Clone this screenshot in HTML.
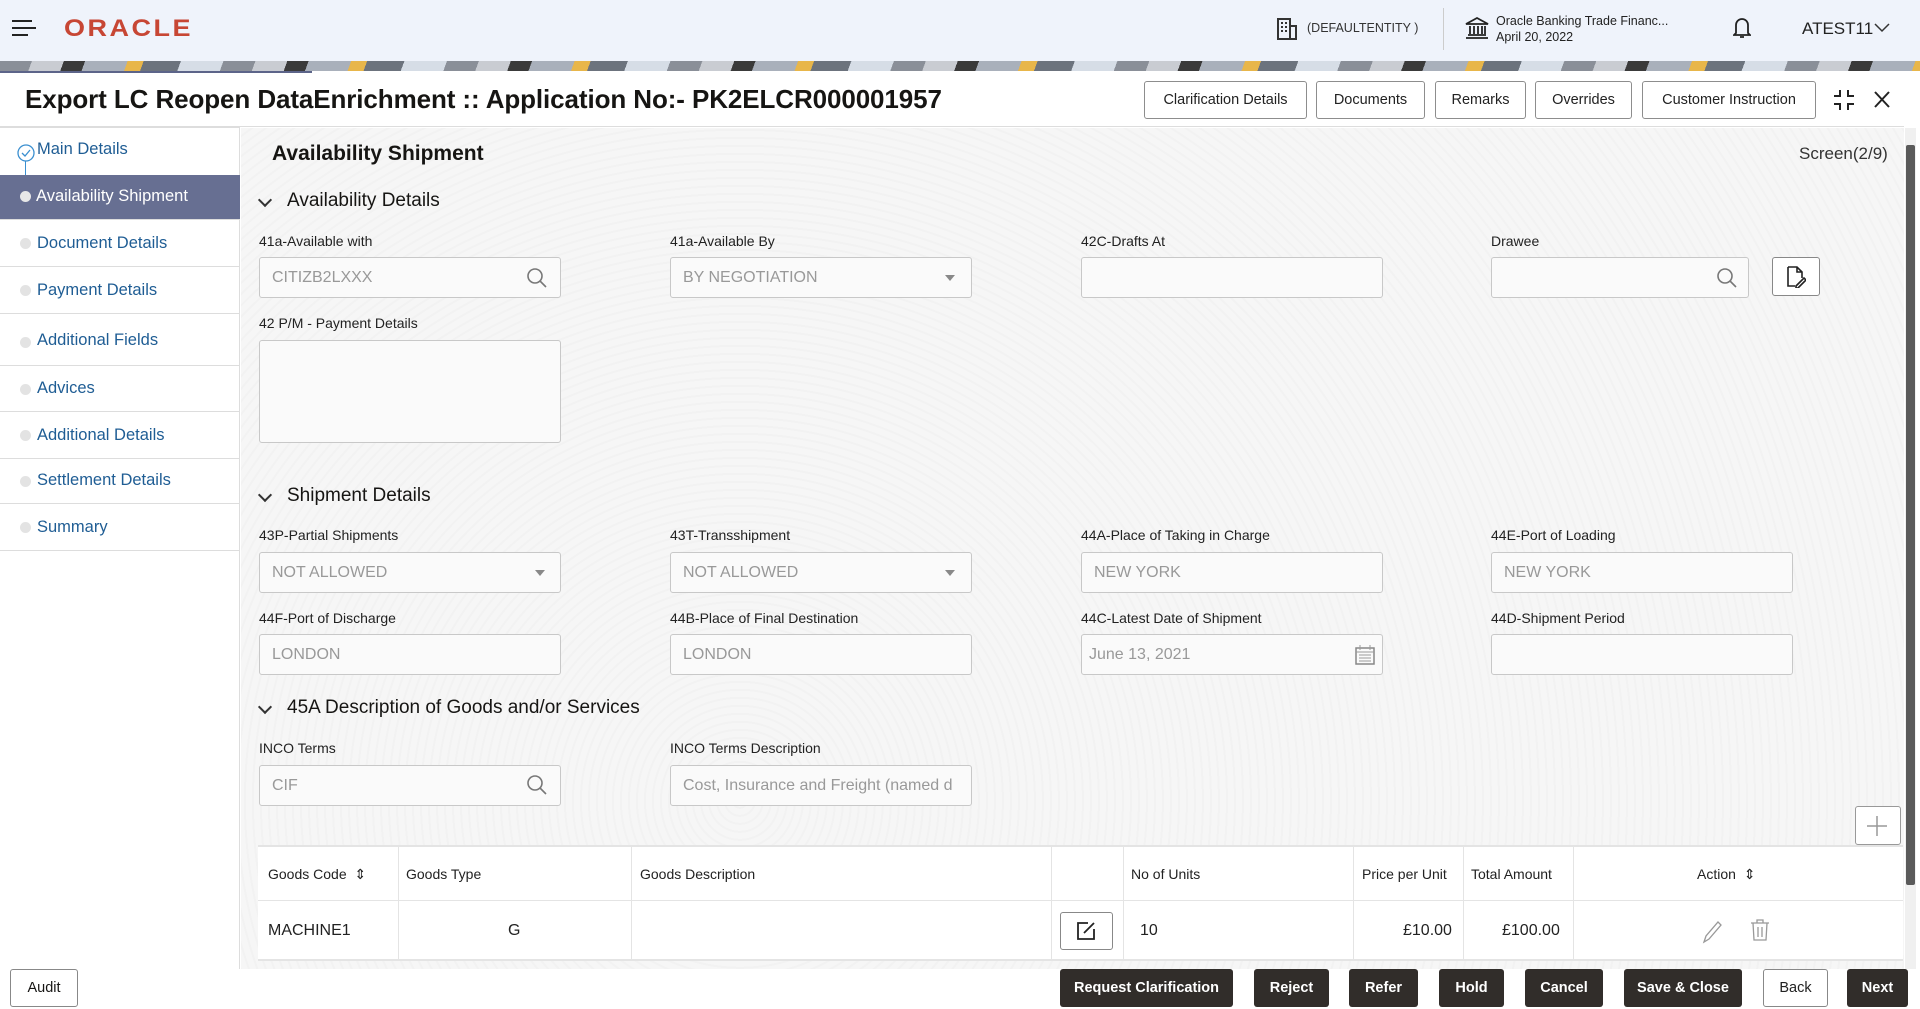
<!DOCTYPE html>
<html><head><meta charset="utf-8"><style>
*{box-sizing:border-box;margin:0;padding:0}
body{width:1920px;height:1009px;overflow:hidden;font-family:"Liberation Sans",sans-serif;background:#f4f4f4;position:relative;color:#161513}
.a{position:absolute}
.hdr{left:0;top:0;width:1920px;height:61px;background:#eff3fb}
.stripe{left:0;top:61px;width:1920px;height:10px;background:repeating-linear-gradient(110deg,#8a8f98 0 30px,#c9ccd2 30px 60px,#3a3a3a 60px 80px,#a9b0bb 80px 120px,#e8b64a 120px 135px,#6c737d 135px 170px,#d6dde6 170px 210px)}
.win{left:0;top:71px;width:1920px;height:938px;background:#fff}
.title{left:25px;top:84px;font-size:26px;font-weight:bold;letter-spacing:-0.1px}
.btn{position:absolute;top:81px;height:38px;border:1px solid #8d8d8d;border-radius:3px;background:#fff;font-size:14.5px;display:flex;align-items:center;justify-content:center;color:#222}
.side{left:0;top:127px;width:240px;height:842px;background:#fff;border-right:1px solid #ddd;border-top:1px solid #ddd}
.si{position:absolute;left:0;width:240px;font-size:16.5px;color:#1f5d94;padding-left:37px;border-bottom:1px solid #ddd}
.dot{position:absolute;left:20px;width:11px;height:11px;border-radius:50%;background:#e3e3e3}
.content{left:241px;top:128px;width:1663px;height:841px;background:#f6f6f6;background-image:repeating-radial-gradient(circle at 30% 80%,transparent 0 6px,rgba(0,0,0,.015) 6px 8px)}
.lbl{position:absolute;font-size:14px;color:#222}
.inp{position:absolute;height:41px;width:302px;border:1px solid #c8c8c8;border-radius:3px;background:#fafafa;font-size:16px;color:#999;padding:11px 12px;white-space:nowrap;overflow:hidden}
.sec{position:absolute;left:260px;font-size:19px;color:#161513}
.sec:before{content:"";position:absolute;left:0;top:5px;width:8px;height:8px;border-right:2px solid #333;border-bottom:2px solid #333;transform:rotate(45deg)}
.sec span{margin-left:27px}
.fb{position:absolute;top:969px;height:38px;border-radius:3px;background:#312d2a;color:#fff;font-size:14.5px;font-weight:bold;display:flex;align-items:center;justify-content:center}
.th{position:absolute;top:866px;font-size:14px;color:#222}
.td{position:absolute;top:922px;font-size:16px;color:#222}
.vl{position:absolute;width:1px;background:#e4e4e4;top:845px;height:116px}
</style></head><body>
<div class="a hdr"></div>
<svg class="a" style="left:12px;top:19px" width="24" height="20"><path d="M0 2h20M0 9h24M0 16h16" stroke="#222" stroke-width="2"/></svg>
<div class="a" style="left:64px;top:13px;font-size:27px;font-weight:bold;color:#c74634;letter-spacing:2.5px;transform:scaleY(0.9)">ORACLE</div>
<svg class="a" style="left:1277px;top:18px" width="20" height="22"><rect x="1" y="1" width="12" height="20" fill="none" stroke="#333" stroke-width="2"/><rect x="13" y="8" width="6" height="13" fill="none" stroke="#333" stroke-width="2"/><path d="M4 5h2M8 5h2M4 9h2M8 9h2M4 13h2M8 13h2" stroke="#333" stroke-width="2"/></svg>
<div class="a" style="left:1307px;top:21px;font-size:12.5px;color:#333">(DEFAULTENTITY )</div>
<div class="a" style="left:1443px;top:8px;width:1px;height:42px;background:#ccc"></div>
<svg class="a" style="left:1465px;top:16px" width="24" height="24"><path d="M1 8L12 2l11 6zM1 22h22M3 19h18M5 10v8M9 10v8M13 10v8M17 10v8M20 10v8" stroke="#222" stroke-width="1.8" fill="none"/></svg>
<div class="a" style="left:1496px;top:13px;font-size:12.5px;color:#222;line-height:16px">Oracle Banking Trade Financ...<br>April 20, 2022</div>
<svg class="a" style="left:1733px;top:16px" width="18" height="24"><path d="M3 17V9a6 6 0 0 1 12 0v8l2 2H1zM7 21h4" stroke="#222" stroke-width="1.8" fill="none"/></svg>
<div class="a" style="left:1802px;top:19px;font-size:17px;color:#222">ATEST11</div>
<svg class="a" style="left:1874px;top:23px" width="16" height="10"><path d="M1 1l7 7 7-7" stroke="#333" stroke-width="1.5" fill="none"/></svg>
<div class="a stripe"></div>
<div class="a win"></div>
<div class="a" style="left:0;top:71px;width:312px;height:2px;background:#5c6489"></div>
<div class="a title">Export LC Reopen DataEnrichment :: Application No:- PK2ELCR000001957</div>
<div class="btn" style="left:1144px;width:163px">Clarification Details</div>
<div class="btn" style="left:1316px;width:109px">Documents</div>
<div class="btn" style="left:1435px;width:91px">Remarks</div>
<div class="btn" style="left:1535px;width:97px">Overrides</div>
<div class="btn" style="left:1642px;width:174px">Customer Instruction</div>
<svg class="a" style="left:1832px;top:88px" width="24" height="24"><path d="M8 2v6H2M16 2v6h6M8 22v-6H2M16 22v-6h6" stroke="#222" stroke-width="2" fill="none"/></svg>
<svg class="a" style="left:1874px;top:91px" width="16" height="17"><path d="M1 1l14 15M15 1L1 16" stroke="#222" stroke-width="2"/></svg>
<div class="a" style="left:0;top:126px;width:1904px;height:1px;background:#ddd"></div>
<div class="a side">
<div class="si" style="top:0;height:47px;padding-top:12px;border-bottom:none">Main Details</div>
<svg class="a" style="left:17px;top:16px" width="18" height="18"><circle cx="9" cy="9" r="8" fill="none" stroke="#3a8fd0" stroke-width="1.3"/><path d="M5 9l3 3 5-6" stroke="#3a8fd0" stroke-width="1.3" fill="none"/></svg>
<div class="a" style="left:25px;top:33px;width:1px;height:14px;background:#3a8fd0"></div>
<div class="si" style="top:47px;height:45px;background:#676f92;color:#fff;padding-top:12px;padding-left:36px">Availability Shipment</div>
<div class="dot" style="top:63px;background:#e8e8e8"></div>
<div class="si" style="top:92px;height:47px;padding-top:14px">Document Details</div><div class="dot" style="top:110px"></div>
<div class="si" style="top:139px;height:47px;padding-top:14px">Payment Details</div><div class="dot" style="top:157px"></div>
<div class="si" style="top:186px;height:52px;padding-top:17px">Additional Fields</div><div class="dot" style="top:209px"></div>
<div class="si" style="top:238px;height:46px;padding-top:13px">Advices</div><div class="dot" style="top:256px"></div>
<div class="si" style="top:284px;height:47px;padding-top:14px">Additional Details</div><div class="dot" style="top:302px"></div>
<div class="si" style="top:331px;height:45px;padding-top:12px">Settlement Details</div><div class="dot" style="top:348px"></div>
<div class="si" style="top:376px;height:47px;padding-top:14px">Summary</div><div class="dot" style="top:394px"></div>
</div>
<div class="a content"></div>
<div class="a" style="left:272px;top:142px;font-size:21px;font-weight:bold;color:#161513">Availability Shipment</div>
<div class="a" style="left:1799px;top:144px;font-size:17px;color:#333">Screen(2/9)</div>

<div class="sec" style="top:190px"><span>Availability Details</span></div>
<div class="lbl" style="left:259px;top:233px">41a-Available with</div>
<div class="lbl" style="left:670px;top:233px">41a-Available By</div>
<div class="lbl" style="left:1081px;top:233px">42C-Drafts At</div>
<div class="lbl" style="left:1491px;top:233px">Drawee</div>
<div class="inp" style="left:259px;top:257px">CITIZB2LXXX</div>
<svg class="a" style="left:526px;top:267px" width="22" height="22"><circle cx="9" cy="9" r="7" fill="none" stroke="#777" stroke-width="1.6"/><path d="M14 14l6 6" stroke="#777" stroke-width="1.6"/></svg>
<div class="inp" style="left:670px;top:257px">BY NEGOTIATION</div>
<div class="a" style="left:945px;top:275px;border-left:5px solid transparent;border-right:5px solid transparent;border-top:6px solid #888"></div>
<div class="inp" style="left:1081px;top:257px"></div>
<div class="inp" style="left:1491px;top:257px;width:258px"></div>
<svg class="a" style="left:1716px;top:267px" width="22" height="22"><circle cx="9" cy="9" r="7" fill="none" stroke="#777" stroke-width="1.6"/><path d="M14 14l6 6" stroke="#777" stroke-width="1.6"/></svg>
<div class="a" style="left:1772px;top:257px;width:48px;height:39px;border:1px solid #888;border-radius:3px;background:#fff"></div>
<svg class="a" style="left:1786px;top:266px" width="20" height="22"><path d="M2 1h9l5 5v6M2 1v19h7M11 1v5h5M10 20l8-8 2 2-8 8h-2z" stroke="#222" stroke-width="1.6" fill="none"/></svg>
<div class="lbl" style="left:259px;top:315px">42 P/M - Payment Details</div>
<div class="inp" style="left:259px;top:340px;height:103px"></div>

<div class="sec" style="top:485px"><span>Shipment Details</span></div>
<div class="lbl" style="left:259px;top:527px">43P-Partial Shipments</div>
<div class="lbl" style="left:670px;top:527px">43T-Transshipment</div>
<div class="lbl" style="left:1081px;top:527px">44A-Place of Taking in Charge</div>
<div class="lbl" style="left:1491px;top:527px">44E-Port of Loading</div>
<div class="inp" style="left:259px;top:552px">NOT ALLOWED</div>
<div class="a" style="left:535px;top:570px;border-left:5px solid transparent;border-right:5px solid transparent;border-top:6px solid #888"></div>
<div class="inp" style="left:670px;top:552px">NOT ALLOWED</div>
<div class="a" style="left:945px;top:570px;border-left:5px solid transparent;border-right:5px solid transparent;border-top:6px solid #888"></div>
<div class="inp" style="left:1081px;top:552px">NEW YORK</div>
<div class="inp" style="left:1491px;top:552px">NEW YORK</div>
<div class="lbl" style="left:259px;top:610px">44F-Port of Discharge</div>
<div class="lbl" style="left:670px;top:610px">44B-Place of Final Destination</div>
<div class="lbl" style="left:1081px;top:610px">44C-Latest Date of Shipment</div>
<div class="lbl" style="left:1491px;top:610px">44D-Shipment Period</div>
<div class="inp" style="left:259px;top:634px">LONDON</div>
<div class="inp" style="left:670px;top:634px">LONDON</div>
<div class="inp" style="left:1081px;top:634px;padding-left:7px">June 13, 2021</div>
<svg class="a" style="left:1354px;top:644px" width="22" height="22"><rect x="2" y="4" width="18" height="16" fill="none" stroke="#888" stroke-width="1.5"/><path d="M2 8h18M6 1v5M16 1v5M5 11h12M5 14h12M5 17h12" stroke="#999" stroke-width="1"/></svg>
<div class="inp" style="left:1491px;top:634px"></div>

<div class="sec" style="top:697px"><span>45A Description of Goods and/or Services</span></div>
<div class="lbl" style="left:259px;top:740px">INCO Terms</div>
<div class="lbl" style="left:670px;top:740px">INCO Terms Description</div>
<div class="inp" style="left:259px;top:765px">CIF</div>
<svg class="a" style="left:526px;top:774px" width="22" height="22"><circle cx="9" cy="9" r="7" fill="none" stroke="#777" stroke-width="1.6"/><path d="M14 14l6 6" stroke="#777" stroke-width="1.6"/></svg>
<div class="inp" style="left:670px;top:765px">Cost, Insurance and Freight (named d</div>
<div class="a" style="left:1855px;top:806px;width:46px;height:39px;border:1px solid #999;border-radius:3px;background:#fff"></div>
<svg class="a" style="left:1866px;top:815px" width="22" height="22"><path d="M11 1v20M1 11h20" stroke="#999" stroke-width="1.5"/></svg>

<div class="a" style="left:258px;top:845px;width:1645px;height:116px;background:#fff;border-top:2px solid #e4e4e4;border-bottom:2px solid #e4e4e4"></div>
<div class="a" style="left:258px;top:900px;width:1645px;height:1px;background:#e4e4e4"></div>
<div class="vl" style="left:398px"></div><div class="vl" style="left:631px"></div><div class="vl" style="left:1051px"></div><div class="vl" style="left:1123px"></div><div class="vl" style="left:1353px"></div><div class="vl" style="left:1463px"></div><div class="vl" style="left:1573px"></div>
<div class="th" style="left:268px">Goods Code &nbsp;⇕</div>
<div class="th" style="left:406px">Goods Type</div>
<div class="th" style="left:640px">Goods Description</div>
<div class="th" style="left:1131px">No of Units</div>
<div class="th" style="left:1362px">Price per Unit</div>
<div class="th" style="left:1471px">Total Amount</div>
<div class="th" style="left:1697px">Action &nbsp;⇕</div>
<div class="td" style="left:268px">MACHINE1</div>
<div class="td" style="left:508px">G</div>
<div class="a" style="left:1060px;top:912px;width:53px;height:38px;border:1px solid #888;border-radius:3px;background:#fff"></div>
<svg class="a" style="left:1076px;top:921px" width="20" height="20"><path d="M12 2H2v16h16V8M8 12l10-10" stroke="#222" stroke-width="1.8" fill="none"/></svg>
<div class="td" style="left:1140px">10</div>
<div class="td" style="left:1403px">£10.00</div>
<div class="td" style="left:1502px">£100.00</div>
<svg class="a" style="left:1701px;top:920px" width="22" height="24"><path d="M3 22l2-6L17 2l3 3L8 19z" stroke="#999" stroke-width="1.3" fill="none"/></svg>
<svg class="a" style="left:1750px;top:918px" width="20" height="24"><path d="M1 5h18M7 5V2h6v3M3 5l1 17h12l1-17M8 9v10M12 9v10" stroke="#999" stroke-width="1.3" fill="none"/></svg>

<div class="a" style="left:1905px;top:128px;width:11px;height:841px;background:#f0f0f0"></div>
<div class="a" style="left:1906px;top:145px;width:9px;height:740px;background:#5a5a5a;border-radius:2px"></div>

<div class="a" style="left:10px;top:969px;width:68px;height:38px;border:1px solid #888;border-radius:3px;background:#fff;font-size:14.5px;display:flex;align-items:center;justify-content:center">Audit</div>
<div class="fb" style="left:1060px;width:173px">Request Clarification</div>
<div class="fb" style="left:1254px;width:75px">Reject</div>
<div class="fb" style="left:1349px;width:69px">Refer</div>
<div class="fb" style="left:1439px;width:65px">Hold</div>
<div class="fb" style="left:1525px;width:78px">Cancel</div>
<div class="fb" style="left:1624px;width:118px">Save &amp; Close</div>
<div class="fb" style="left:1763px;width:65px;background:#fff;color:#222;border:1px solid #888;font-weight:normal">Back</div>
<div class="fb" style="left:1847px;width:61px">Next</div>
</body></html>
